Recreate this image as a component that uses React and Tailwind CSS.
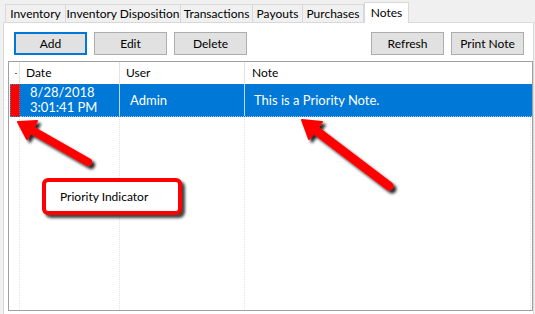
import React from "react";

const tabs = [
  { label: "Inventory", w: "w-[61px]" },
  { label: "Inventory Disposition", w: "w-[116px]" },
  { label: "Transactions", w: "w-[73px]" },
  { label: "Payouts", w: "w-[51px]" },
  { label: "Purchases", w: "w-[62px]" },
];

function Button({ children, primary }) {
  return (
    <button
      className={
        "w-[73px] h-[23px] bg-[#e1e1e1] text-[12px] text-black flex items-center justify-center " +
        (primary ? "border-2 border-[#0078d7]" : "border border-[#adadad]")
      }
    >
      {children}
    </button>
  );
}

function Arrows() {
  return (
    <svg className="absolute left-0 top-0 pointer-events-none" width="535" height="314">
      <defs>
        <filter id="sh" x="-20%" y="-20%" width="140%" height="140%">
          <feDropShadow dx="3" dy="3" stdDeviation="1.6" floodColor="#000" floodOpacity="0.85" />
        </filter>
      </defs>
      <g filter="url(#sh)" fill="#ff0000" stroke="#ff0000">
        <line x1="30" y1="129" x2="88" y2="162" strokeWidth="8" strokeLinecap="round" />
        <polygon points="18,122 37,121 27,139" strokeWidth="2" strokeLinejoin="round" />
        <line x1="314" y1="129" x2="389" y2="186" strokeWidth="9" strokeLinecap="round" />
        <polygon points="302,120 322,122 309,139" strokeWidth="2" strokeLinejoin="round" />
      </g>
    </svg>
  );
}

export default function App() {
  return (
    <div className="relative w-[535px] h-[314px] overflow-hidden bg-[#f0f0f0] font-['Lato',sans-serif] text-[12px] text-black leading-none whitespace-nowrap">
      {/* tab strip */}
      <div className="flex items-end h-[22px] pl-[5px]">
        {tabs.map((t, i) => (
          <div
            key={t.label}
            className={
              t.w +
              " h-[18px] border border-b-0 border-[#d9d9d9] bg-[#f0f0f0] flex items-center justify-center" +
              (i > 0 ? " -ml-px" : "")
            }
          >
            {t.label}
          </div>
        ))}
        <div className="relative z-10 w-[45px] h-[21px] mb-[-1px] border border-b-0 border-[#d9d9d9] bg-white flex justify-center pt-[4px]">
          Notes
        </div>
      </div>

      {/* tab page */}
      <div className="ml-[3px] w-[531px] h-[300px] border border-[#d9d9d9] bg-white">
        <div className="flex justify-between pl-[10px] pr-[9px] pt-[9px]">
          <div className="flex gap-[7px]">
            <Button primary>Add</Button>
            <Button>Edit</Button>
            <Button>Delete</Button>
          </div>
          <div className="flex gap-[7px]">
            <Button>Refresh</Button>
            <Button>Print Note</Button>
          </div>
        </div>

        {/* grid */}
        <div className="ml-[4px] mt-[6px] w-[525px] h-[250px] border border-[#a0a0a0] flex flex-col">
          <div className="flex h-[22px] bg-white items-center">
            <div className="w-[11px] h-full border-r border-[#e3e3e3] flex items-center justify-end pr-[2px]">
              <span className="w-[2px] h-px bg-[#666]" />
            </div>
            <div className="w-[100px] h-full border-r border-[#e3e3e3] flex items-center pl-[6px]">Date</div>
            <div className="w-[125px] h-full border-r border-[#e3e3e3] flex items-center pl-[6px]">User</div>
            <div className="w-[286px] h-full flex items-center pl-[7px]">Note</div>
          </div>

          <div className="flex h-[33px]">
            <div className="w-[11px] h-full pl-px">
              <div className="w-[10px] h-full bg-[#ff0000] border border-dotted border-[#2b8fc4]" />
            </div>
            <div className="flex flex-1 bg-[#0078d7] text-white text-[13px] border-b border-dotted border-[#9cc7ec]">
              <div className="w-[100px] h-full border-r border-[#b9d8f3] flex flex-col justify-center pl-[10px] leading-[15px]">
                <span>8/28/2018</span>
                <span>3:01:41 PM</span>
              </div>
              <div className="w-[125px] h-full border-r border-[#b9d8f3] flex items-center pl-[10px]">Admin</div>
              <div className="w-[286px] h-full flex items-center pl-[9px]">This is a Priority Note.</div>
            </div>
          </div>

          <div className="flex flex-1">
            <div className="w-[11px] border-r border-dotted border-[#e3e3e3]" />
            <div className="w-[100px] border-r border-dotted border-[#e3e3e3]" />
            <div className="w-[125px] border-r border-dotted border-[#e3e3e3]" />
            <div className="w-[286px] border-r border-dotted border-[#e3e3e3]" />
          </div>
        </div>
      </div>

      <Arrows />

      {/* callout */}
      <div className="absolute left-[42px] top-[178px] w-[140px] h-[37px] rounded-[6px] border-4 border-[#ff0000] bg-white shadow-[3px_3px_3px_rgba(0,0,0,0.75)] flex items-center pl-[14px]">
        Priority Indicator
      </div>
    </div>
  );
}
